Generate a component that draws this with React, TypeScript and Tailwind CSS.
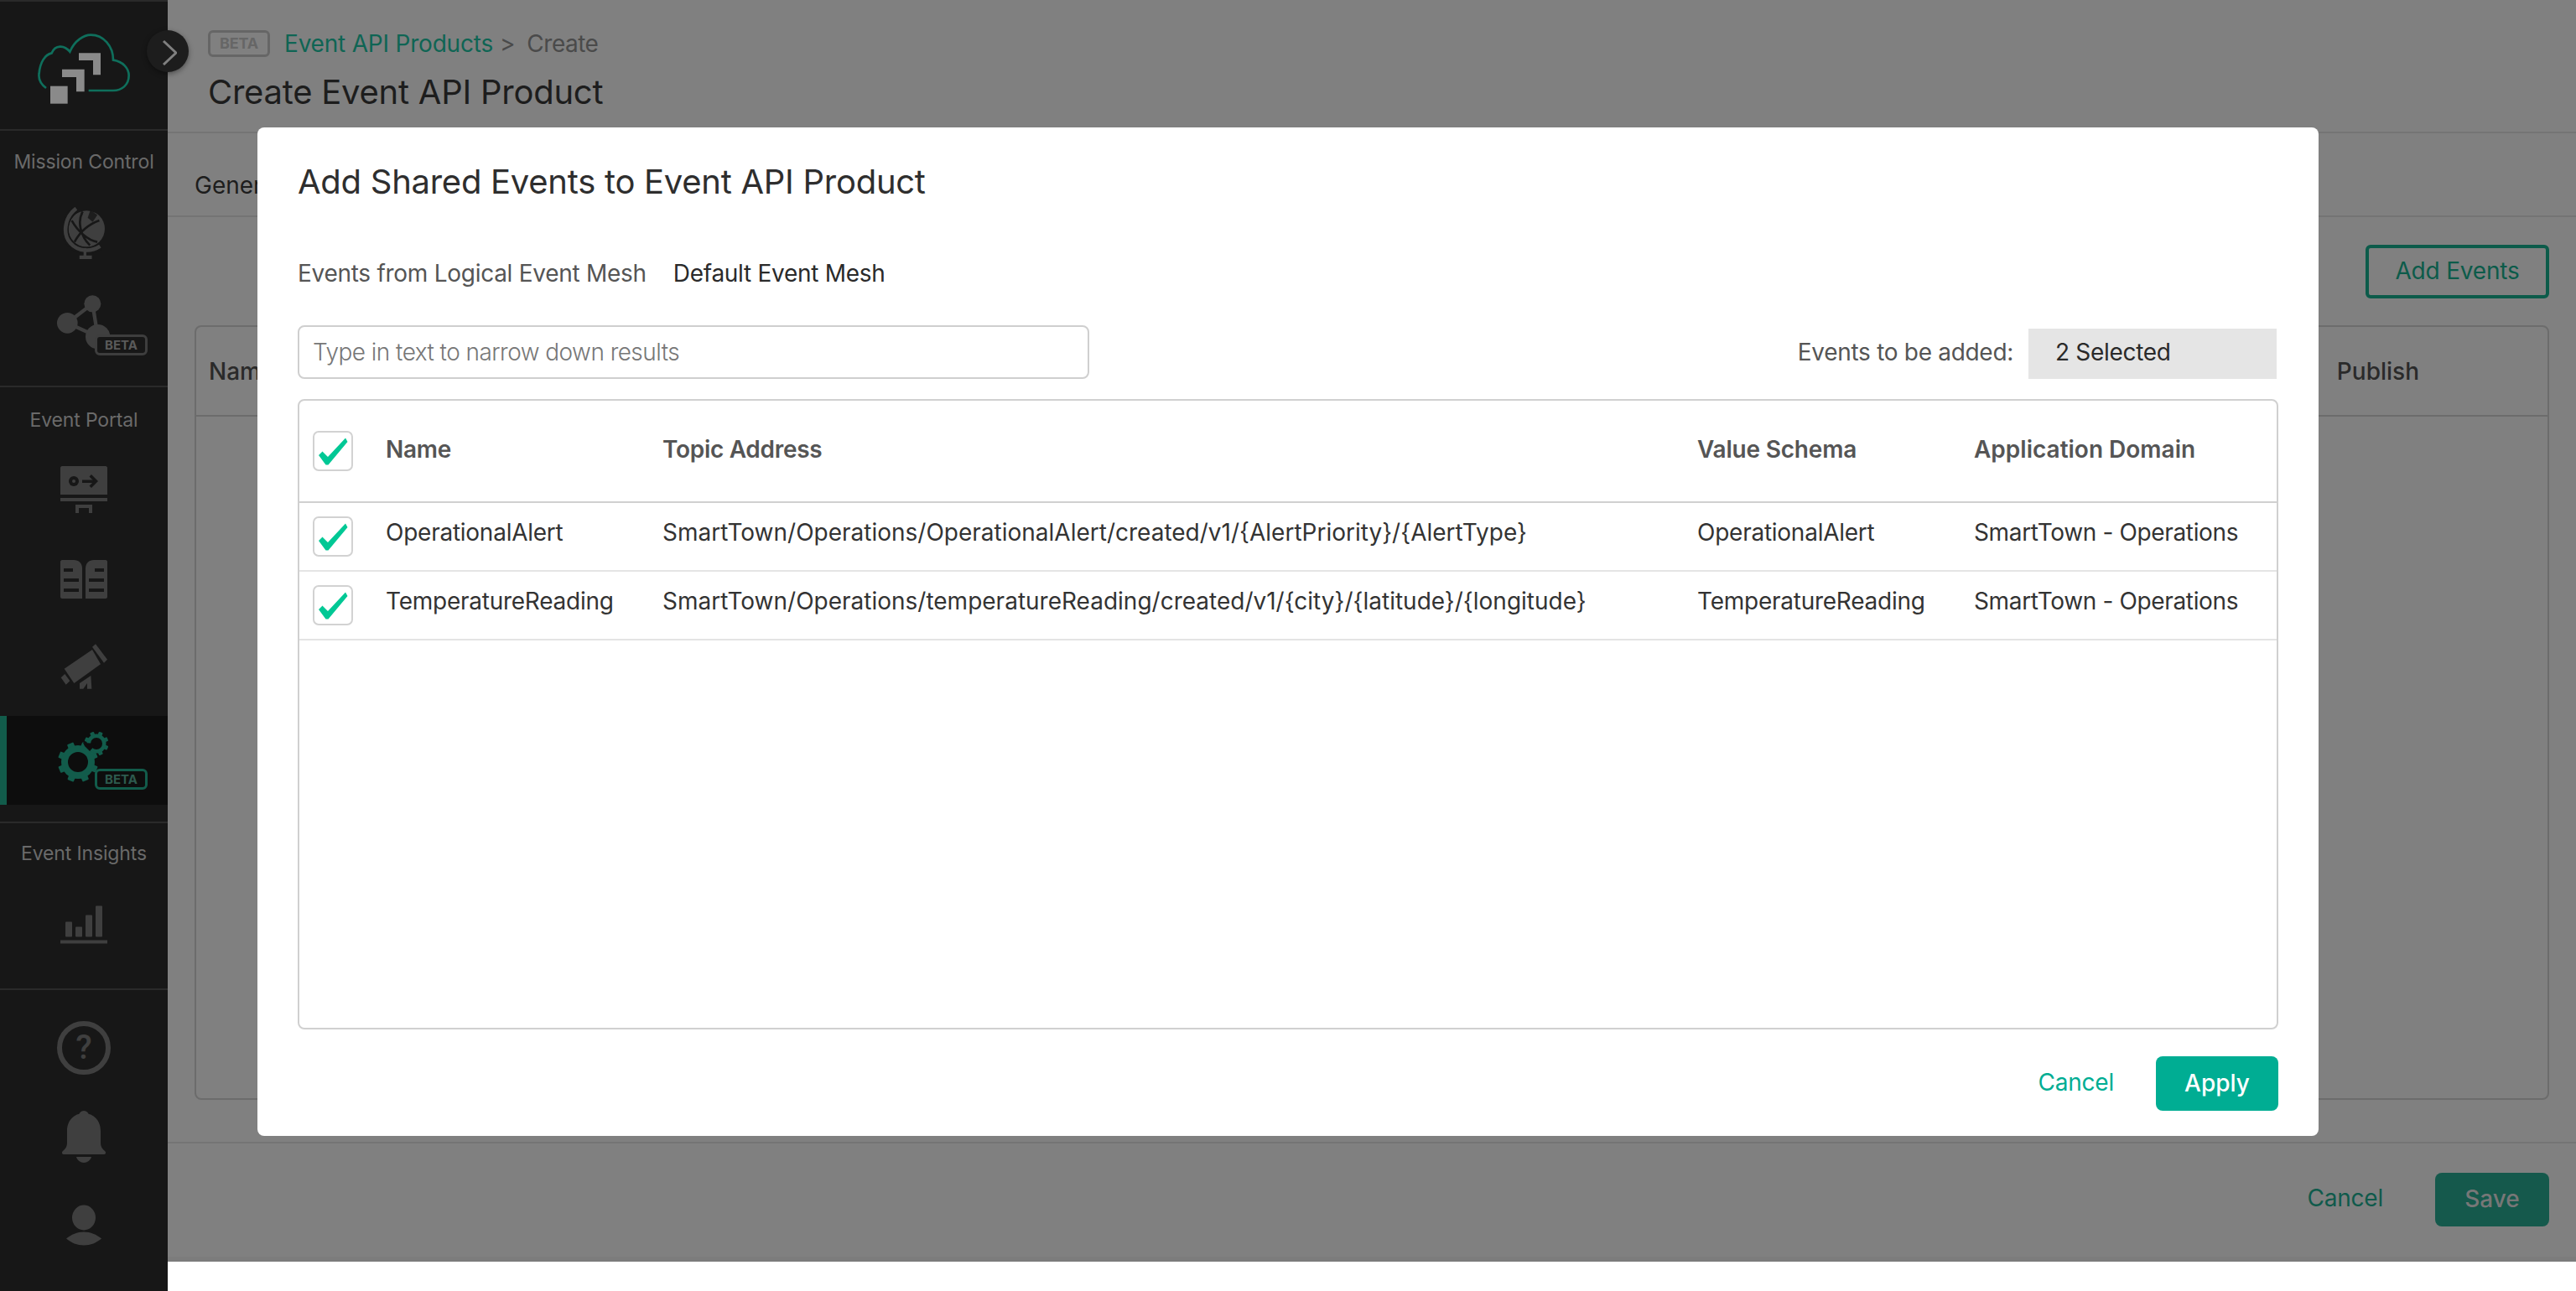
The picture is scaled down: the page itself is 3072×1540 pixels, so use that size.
import React from "react";

function Check() {
  return (
    <div className="relative h-[48px] w-[48px] shrink-0 rounded-[7px] border-2 border-[#d2d2d2] bg-white">
      <svg viewBox="0 0 48 48" className="absolute left-[-2px] top-[-2px] h-[48px] w-[48px]">
        <path d="M7 29 L11.5 24.5 L18 31 L39 8.5 L41.5 13 L18.5 40.5 L15.5 40.5 Z" fill="#00c895" />
      </svg>
    </div>
  );
}

function Beta({ green, className }: { green?: boolean; className: string }) {
  return (
    <div
      className={`flex h-[25px] w-[63px] items-center justify-center rounded-[6px] border-[3px] text-[15px] font-bold leading-none ${green ? "border-[#125c4b] bg-[#0d0d0d] text-[#2d5a4e]" : "border-[#3e3e3e] bg-[#171717] text-[#5a5a5a]"} ${className}`}
    >
      BETA
    </div>
  );
}

function Logo() {
  return (
    <svg viewBox="130 120 330 255" className="h-[85px] w-[110px]">
      <path
        d="M160 315 C140 300 132 280 135 262 C138 225 155 195 180 190 C192 160 225 160 245 185 C262 145 295 125 320 125 C365 125 400 165 400 215 C435 220 456 245 456 270 C456 305 430 324 400 324 L312 324"
        fill="none"
        stroke="#0f6f5c"
        strokeWidth="8"
      />
      <path d="M277 190 H355 V268 H328 V216 H277 Z" fill="#8a8a8a" />
      <path d="M217 248 H297 V328 H268 V276 H217 Z" fill="#8a8a8a" />
      <rect x="175" y="308" width="62" height="63" fill="#8a8a8a" />
    </svg>
  );
}

const ic = "#3f3f3f";
const bg = "#171717";

function Globe() {
  return (
    <svg viewBox="220 738 155 195" className="h-[64px] w-[51px]">
      <circle cx="306" cy="820" r="66" fill={ic} />
      <path d="M268 748 C222 780 216 840 245 872 C275 908 325 905 355 885" fill="none" stroke={bg} strokeWidth="26" />
      <path d="M268 746 C225 778 218 840 247 872 C277 906 325 903 355 883" fill="none" stroke={ic} strokeWidth="14" />
      <path d="M252 790 C275 830 310 862 345 868 M262 868 C280 835 310 805 352 790 M292 758 C272 790 282 845 318 880" fill="none" stroke={bg} strokeWidth="8" />
      <path d="M320 752 L345 770 L328 795 L310 780 Z" fill={bg} opacity="0.85" />
      <rect x="295" y="890" width="10" height="30" fill={ic} />
      <rect x="280" y="917" width="45" height="13" fill={ic} />
    </svg>
  );
}

function Mesh() {
  return (
    <svg viewBox="204 1057 189 193" className="h-[65px] w-[63px]">
      <path d="M241 1156 L331 1087 L350 1205 Z" fill="none" stroke={ic} strokeWidth="13" />
      <circle cx="241" cy="1156" r="37" fill={ic} />
      <circle cx="331" cy="1087" r="30" fill={ic} />
      <circle cx="350" cy="1205" r="44" fill={ic} />
    </svg>
  );
}

function Designer() {
  return (
    <svg viewBox="0 0 56 56" className="h-[56px] w-[56px]">
      <path d="M2 0 H54 C55 0 56 1 56 2 V34 H0 V2 C0 1 1 0 2 0 Z" fill={ic} />
      <rect x="0" y="38" width="56" height="4" fill={ic} />
      <path d="M18 46 H38 V56 H34 V50 H22 V56 H18 Z" fill={ic} />
      <circle cx="16" cy="18" r="6" fill={bg} />
      <circle cx="16" cy="18" r="2" fill={ic} />
      <rect x="26" y="16.5" width="14" height="3.5" fill={bg} />
      <path d="M37 10 L45 18 L37 26 L34.5 23.5 L40 18 L34.5 12.5 Z" fill={bg} />
    </svg>
  );
}

function Book() {
  return (
    <svg viewBox="0 0 56 46" className="h-[46px] w-[56px]">
      <path d="M2 0 H16 C22 0 26 4 26 10 V46 H2 C1 46 0 45 0 44 V2 C0 1 1 0 2 0 Z" fill={ic} />
      <path d="M54 0 H40 C34 0 30 4 30 10 V46 H54 C55 46 56 45 56 44 V2 C56 1 55 0 54 0 Z" fill={ic} />
      <rect x="4" y="10" width="11" height="4" fill={bg} />
      <rect x="4" y="22" width="18" height="4" fill={bg} />
      <rect x="4" y="34" width="18" height="4" fill={bg} />
      <rect x="41" y="10" width="11" height="4" fill={bg} />
      <rect x="34" y="22" width="18" height="4" fill={bg} />
      <rect x="34" y="34" width="18" height="4" fill={bg} />
    </svg>
  );
}

function Scope() {
  return (
    <svg viewBox="216 805 168 160" className="h-[54px] w-[56px]">
      <path d="M230 893 L330 825 L360 877 L265 945 Z" fill={ic} />
      <path d="M330 815 L342 805 L384 860 L372 872 Z" fill={ic} />
      <path d="M218 925 L232 912 L250 937 L236 950 Z" fill={ic} />
      <path d="M285 965 V945 L325 918 L328 965 H312 V945 L298 965 Z" fill={ic} />
    </svg>
  );
}

function Gears() {
  const c = "#125c4b";
  const dark = "#0d0d0d";
  const teeth = (cx: number, cy: number, r: number, w: number, n: number) =>
    Array.from({ length: n }).map((_, i) => (
      <rect key={i} x={cx - w / 2} y={cy - r} width={w} height={r * 2} rx="1" fill={c} transform={`rotate(${(180 / n) * i + 22} ${cx} ${cy})`} />
    ));
  return (
    <svg viewBox="0 0 62 62" className="h-[62px] w-[62px]">
      {teeth(24, 37, 24, 8, 4)}
      <circle cx="24" cy="37" r="20" fill={c} />
      <circle cx="24" cy="37" r="12" fill={dark} />
      {teeth(46, 15, 14.5, 5, 4)}
      <circle cx="46" cy="15" r="11.5" fill={c} />
      <circle cx="46" cy="15" r="7" fill={dark} />
      <path d="M46 15 L30 14 L32 18 L38 24 Z" fill={dark} />
    </svg>
  );
}

function Bars() {
  return (
    <svg viewBox="0 0 56 45" className="h-[46px] w-[56px]">
      <rect x="6" y="19" width="8" height="18" rx="1" fill={ic} />
      <rect x="18" y="25" width="8" height="12" rx="1" fill={ic} />
      <rect x="30" y="11" width="8" height="26" rx="1" fill={ic} />
      <rect x="42" y="0" width="8" height="37" rx="1" fill={ic} />
      <rect x="0" y="41" width="56" height="4" fill={ic} />
    </svg>
  );
}

function Help() {
  return (
    <div className="flex h-[64px] w-[64px] items-center justify-center rounded-full border-[6px] border-[#3f3f3f] text-[40px] font-medium leading-none text-[#3f3f3f] [font-family:'Roboto',sans-serif]">
      ?
    </div>
  );
}

function Bell() {
  return (
    <svg viewBox="0 0 52 62" className="h-[64px] w-[52px]">
      <circle cx="26" cy="6" r="6" fill={ic} />
      <path d="M26 3 C38 3 46 12 46 24 V38 C46 44 49 46 51 48 C53 50 52 52 49 52 H3 C0 52 -1 50 1 48 C3 46 6 44 6 38 V24 C6 12 14 3 26 3 Z" fill={ic} />
      <path d="M17 55 H35 C34 59 30 62 26 62 C22 62 18 59 17 55 Z" fill={ic} />
    </svg>
  );
}

function User() {
  return (
    <svg viewBox="0 0 42 48" className="h-[49px] w-[42px]">
      <ellipse cx="21" cy="15" rx="14" ry="15" fill={ic} />
      <path d="M0 40 C6 35 13 32 21 32 C29 32 36 35 42 40 C36 45 29 48 21 48 C13 48 6 45 0 40 Z" fill={ic} />
    </svg>
  );
}

function SideLabel({ children }: { children: React.ReactNode }) {
  return <div className="text-center text-[23px] leading-[26px] tracking-[-0.15px] text-[#6a6a6a]">{children}</div>;
}

function Sidebar() {
  return (
    <aside className="flex h-[1540px] w-[200px] shrink-0 flex-col border-t-2 border-[#2a2a2a] bg-[#171717]">
      <div className="flex h-[154px] shrink-0 items-start justify-center border-b-2 border-[#2a2a2a] pt-[38px]">
        <Logo />
      </div>
      <div className="flex h-[306px] shrink-0 flex-col items-center border-b-2 border-[#2a2a2a] pt-[24px]">
        <SideLabel>Mission Control</SideLabel>
        <div className="mt-[40px]"><Globe /></div>
        <div className="relative mt-[42px] h-[72px] w-[108px] pl-[22px]">
          <Mesh />
          <Beta className="absolute left-[67px] top-[47px]" />
        </div>
      </div>
      <div className="flex h-[520px] shrink-0 flex-col items-center border-b-2 border-[#2a2a2a] pt-[26px]">
        <SideLabel>Event Portal</SideLabel>
        <div className="mt-[42px]"><Designer /></div>
        <div className="mt-[56px]"><Book /></div>
        <div className="mt-[54px]"><Scope /></div>
        <div className="relative mt-[32px] flex h-[106px] w-full items-center justify-center border-l-[8px] border-[#125c4b] bg-[#0d0d0d]">
          <div className="mb-[9px] mr-[8px]"><Gears /></div>
          <Beta green className="absolute left-[105px] top-[63px]" />
        </div>
      </div>
      <div className="flex h-[199px] shrink-0 flex-col items-center border-b-2 border-[#2a2a2a] pt-[23px]">
        <SideLabel>Event Insights</SideLabel>
        <div className="mt-[49px]"><Bars /></div>
      </div>
      <div className="flex flex-col items-center pt-[37px]">
        <Help />
        <div className="mt-[42px]"><Bell /></div>
        <div className="mt-[49px]"><User /></div>
      </div>
    </aside>
  );
}

function Page() {
  return (
    <main className="flex h-[1505px] min-w-0 flex-1 flex-col bg-[#808080]">
      <header className="flex h-[159px] shrink-0 flex-col border-b-2 border-[#747474] pl-[48px] pt-[36px]">
        <div className="flex items-center text-[28px] leading-[32px] tracking-[-0.2px] text-[#4a4a4a]">
          <span className="mr-[17px] flex h-[32px] w-[74px] items-center justify-center rounded-[6px] border-[3px] border-[#666] text-[18px] font-bold text-[#666]">BETA</span>
          <span className="text-[#0f6554]">Event API Products</span>
          <span className="ml-[8px]">&gt;</span>
          <span className="ml-[14px] tracking-[-0.5px]">Create</span>
        </div>
        <h1 className="mt-[18px] text-[40px] font-normal leading-[48px] tracking-[-0.25px] text-[#1d1d1d]">Create Event API Product</h1>
      </header>
      <div className="flex h-[100px] shrink-0 items-center border-b-2 border-[#747474] pl-[32px] pt-[26px] text-[28px] text-[#1d1d1d]">General</div>
      <div className="flex min-h-0 flex-1 flex-col px-[32px] pb-[50px]">
        <div className="flex h-[129px] shrink-0 items-center justify-end">
          <div className="flex h-[64px] w-[219px] items-center justify-center rounded-[6px] border-[4px] border-[#0c5b4a] pb-[2px] text-[28px] tracking-[-0.2px] text-[#0c5b4a]">Add Events</div>
        </div>
        <div className="flex min-h-0 flex-1 flex-col rounded-[8px] border-2 border-[#6c6c6c]">
          <div className="flex h-[107px] shrink-0 items-center justify-between border-b-2 border-[#6c6c6c] pl-[15px] pr-[153px] text-[28px] font-medium text-[#2a2a2a]">
            <span>Name</span>
            <span>Publish</span>
          </div>
        </div>
      </div>
      <footer className="flex h-[143px] shrink-0 items-center justify-end gap-[62px] border-t-2 border-b-[6px] border-t-[#747474] border-b-[#7c7c7c] pb-[2px] pr-[32px]">
        <span className="pb-[4px] text-[28px] tracking-[-0.2px] text-[#0f5a4b]">Cancel</span>
        <span className="flex h-[64px] w-[136px] items-center justify-center rounded-[8px] bg-[#15594c] pb-[2px] text-[28px] font-medium text-[#777]">Save</span>
      </footer>
    </main>
  );
}

const rows = [
  ["OperationalAlert", "SmartTown/Operations/OperationalAlert/created/v1/{AlertPriority}/{AlertType}", "OperationalAlert", "SmartTown - Operations"],
  ["TemperatureReading", "SmartTown/Operations/temperatureReading/created/v1/{city}/{latitude}/{longitude}", "TemperatureReading", "SmartTown - Operations"],
];

const grid = "grid grid-cols-[87px_330px_1234px_330px_1fr] items-center pl-[16px]";

function Modal() {
  return (
    <div className="absolute left-[307px] top-[152px] flex h-[1203px] w-[2458px] flex-col rounded-[8px] bg-white px-[48px] pt-[40px]">
      <h2 className="text-[40px] font-normal leading-[50px] tracking-[-0.27px] text-[#2e2e2e]">Add Shared Events to Event API Product</h2>
      <div className="mt-[66px] flex items-center text-[28px] leading-[36px] tracking-[-0.28px]">
        <span className="text-[#555]">Events from Logical Event Mesh</span>
        <span className="ml-[32px] text-[#2a2a2a]">Default Event Mesh</span>
      </div>
      <div className="mt-[44px] flex h-[64px] shrink-0 items-center justify-between pr-[2px]">
        <div className="flex h-[64px] w-[944px] items-center rounded-[8px] border-2 border-[#cfcfcf] pl-[16px] text-[28px] font-light tracking-[-0.55px] text-[#777]">Type in text to narrow down results</div>
        <div className="flex items-center pt-[4px]">
          <span className="pb-[4px] text-[28px] tracking-[-0.3px] text-[#555]">Events to be added:</span>
          <span className="ml-[18px] flex h-[60px] w-[296px] items-center bg-[#e5e5e5] pb-[4px] pl-[32px] text-[28px] tracking-[-0.3px] text-[#2a2a2a]">2 Selected</span>
        </div>
      </div>
      <div className="mt-[24px] flex h-[752px] shrink-0 flex-col rounded-[8px] border-2 border-[#d0d0d0]">
        <div className={`${grid} h-[122px] shrink-0 border-b-2 border-[#d0d0d0] text-[28px] font-semibold text-[#555]`}>
          <Check />
          <span className="pb-[4px] tracking-[-0.3px]">Name</span>
          <span className="pb-[4px] tracking-[-0.3px]">Topic Address</span>
          <span className="pb-[4px] tracking-[-0.2px]">Value Schema</span>
          <span className="pb-[4px]">Application Domain</span>
        </div>
        {rows.map((r) => (
          <div key={r[0]} className={`${grid} h-[82px] shrink-0 border-b-2 border-[#e4e4e4] text-[28px] text-[#333]`}>
            <Check />
            <span className="pb-[10px] tracking-[-0.25px]">{r[0]}</span>
            <span className="pb-[10px]">{r[1]}</span>
            <span className="pb-[10px] tracking-[-0.25px]">{r[2]}</span>
            <span className="pb-[10px] tracking-[-0.35px]">{r[3]}</span>
          </div>
        ))}
      </div>
      <div className="mt-[32px] flex items-center justify-end gap-[50px]">
        <span className="pb-[4px] text-[28px] tracking-[-0.2px] text-[#00ad93]">Cancel</span>
        <span className="flex h-[65px] w-[146px] items-center justify-center rounded-[8px] bg-[#00ad93] pb-[2px] text-[28px] font-medium text-white">Apply</span>
      </div>
    </div>
  );
}

export default function App() {
  return (
    <div className="relative flex h-[1540px] w-[3072px] overflow-hidden bg-white [font-family:'Inter',sans-serif]">
      <Sidebar />
      <Page />
      <div className="absolute left-[175px] top-[36px] flex h-[50px] w-[50px] items-center justify-center rounded-full bg-[#1d1d1d] shadow-[0_2px_6px_rgba(0,0,0,0.4)]">
        <svg viewBox="0 0 22 34" className="h-[34px] w-[22px]">
          <path d="M6 5 L21 19 L6 33" fill="none" stroke="#808080" strokeWidth="3" />
        </svg>
      </div>
      <Modal />
    </div>
  );
}
